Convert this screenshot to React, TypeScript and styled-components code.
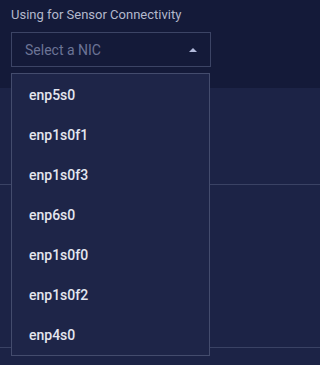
import React, { useState } from "react";
import styled, { createGlobalStyle } from "styled-components";

const GlobalStyle = createGlobalStyle`
  html, body {
    margin: 0;
    padding: 0;
    background: #1c2346;
    font-family: Roboto, "Liberation Sans", sans-serif;
  }
`;

const Page = styled.div`
  position: relative;
  width: 100%;
  height: 365px;
  overflow: hidden;
`;

const Header = styled.div`
  height: 88px;
  box-sizing: border-box;
  padding: 7px 11px 0;
  background: #141a39;
`;

const Label = styled.div`
  font-size: 13px;
  line-height: 16px;
  color: #b3b8cc;
  margin-bottom: 9px;
`;

const SelectBox = styled.div`
  box-sizing: border-box;
  width: 200px;
  height: 35px;
  border: 1px solid #3c4465;
  display: flex;
  align-items: center;
  justify-content: space-between;
  padding: 0 13px 0 13px;
`;

const Placeholder = styled.span`
  font-size: 14px;
  color: #6c7496;
`;

const Caret = styled.span`
  width: 0;
  height: 0;
  border-left: 4px solid transparent;
  border-right: 4px solid transparent;
  border-bottom: 4px solid #b2badb;
`;

const Row = styled.div<{ $height: number }>`
  height: ${(p) => p.$height}px;
  border-bottom: 1px solid #3a4264;
`;

const Menu = styled.ul`
  position: absolute;
  top: 73px;
  left: 11px;
  width: 199px;
  box-sizing: border-box;
  margin: 0;
  padding: 1px 0 0;
  list-style: none;
  background: #1e2548;
  border: 1px solid #444c6d;
`;

const Item = styled.li`
  height: 40px;
  display: flex;
  align-items: center;
  padding-left: 17px;
  font-size: 14px;
  font-weight: 500;
  color: #e4e6ef;
`;

const nics = [
  "enp5s0",
  "enp1s0f1",
  "enp1s0f3",
  "enp6s0",
  "enp1s0f0",
  "enp1s0f2",
  "enp4s0",
];

export default function App() {
  const [open] = useState(true);

  return (
    <Page>
      <GlobalStyle />
      <Header>
        <Label>Using for Sensor Connectivity</Label>
        <SelectBox>
          <Placeholder>Select a NIC</Placeholder>
          <Caret />
        </SelectBox>
      </Header>
      <Row $height={96} />
      <Row $height={162} />
      {open && (
        <Menu>
          {nics.map((nic) => (
            <Item key={nic}>{nic}</Item>
          ))}
        </Menu>
      )}
    </Page>
  );
}
